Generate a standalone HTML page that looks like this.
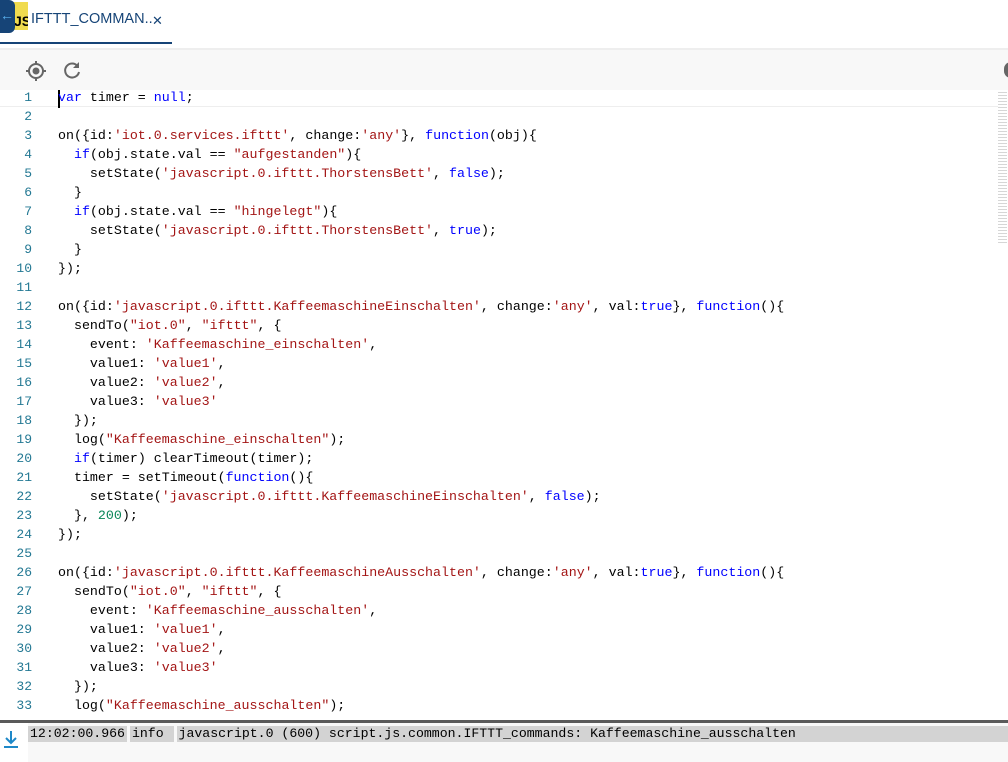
<!DOCTYPE html>
<html><head><meta charset="utf-8"><style>
body{margin:0;width:1008px;height:762px;overflow:hidden;background:#fff;font-family:"Liberation Sans",sans-serif;position:relative}
.tabbar{position:absolute;left:0;top:0;width:1008px;height:48px;background:#fff}
.tab{position:absolute;left:0;top:0;width:172px;height:42px;border-bottom:2px solid #164477}
.js{position:absolute;left:10px;top:2px;width:18px;height:28px;background:#f0db4f;font-weight:bold;font-size:14px;line-height:38px;padding-left:4px;box-sizing:border-box;overflow:hidden}
.back{position:absolute;left:0;top:0;width:15px;height:33px;background:#164477;border-radius:0 6px 6px 0;color:#5ab1ef;font-size:14px;line-height:30px}
.title{position:absolute;left:31px;top:11px;font-size:14.5px;color:#164477}
.x{position:absolute;left:152px;top:13px;font-size:13px;color:#164477}
.toolbar{position:absolute;left:0;top:48px;width:1008px;height:40px;background:#f8f8f8;border-top:2px solid #eee}
.ed{position:absolute;left:0;top:88px;width:1008px;height:632px;font-family:"Liberation Mono",monospace;font-size:13.3px}
.ln{position:absolute;left:0;width:32px;text-align:right;color:#237893;font-size:13px}
.cd{position:absolute;left:58px;white-space:pre;color:#000}
.k{color:#0000ff}.s{color:#a31515}.n{color:#098658}
.sep{position:absolute;left:0;top:720px;width:1008px;height:3px;background:#5a5a5a}
.logbg{position:absolute;left:0;top:723px;width:1008px;height:39px;background:#f8f8f8}
.row{position:absolute;left:28px;top:726px;width:980px;overflow:hidden;height:16px;font-family:"Liberation Mono",monospace;font-size:13.2px;line-height:16px;white-space:pre;color:#000}
.row span{background:#d3d3d3;display:inline-block;margin-right:3px;padding:0 2px}
</style></head><body>
<div class="tabbar">
<div class="tab"></div>
<div class="js">JS</div>
<div class="back">←</div>
<div class="title">IFTTT_COMMAN..</div>
<div class="x">✕</div>
</div>
<div class="toolbar">
<svg style="position:absolute;left:25px;top:10px" width="22" height="22" viewBox="0 0 22 22"><circle cx="11" cy="11" r="7" fill="none" stroke="#666" stroke-width="2"/><circle cx="11" cy="11" r="3.5" fill="#666"/><path d="M11 1v3M11 18v3M1 11h3M18 11h3" stroke="#666" stroke-width="2"/></svg>
<svg style="position:absolute;left:62px;top:10px" width="20" height="20" viewBox="0 0 20 20"><path d="M15.5 6A7 7 0 1 0 17 12" fill="none" stroke="#666" stroke-width="2"/><path d="M17 2v6h-6z" fill="#666"/></svg>
<div style="position:absolute;left:1004px;top:12px;width:14px;height:16px;border-radius:8px;background:#666"></div>
</div>
<div style="position:absolute;left:0;top:106px;width:1000px;height:1px;background:#eee"></div>
<div style="position:absolute;left:998px;top:90px;width:9px;height:155px;background:repeating-linear-gradient(#fff 0,#fff 2px,#ccc 2px,#ccc 3px);opacity:.8"></div>
<div style="position:absolute;left:58px;top:90px;width:2px;height:18px;background:#000"></div>
<div class="ed" id="ed"></div>
<div class="sep"></div>
<div class="logbg"></div>
<div style="position:absolute;left:0;top:723px;width:28px;height:39px;background:#fff"></div>
<svg style="position:absolute;left:3px;top:730px" width="16" height="18" viewBox="0 0 16 18"><path d="M8 1v11M3 8l5 5 5-5" fill="none" stroke="#1e88c8" stroke-width="2"/><path d="M1 17h14" stroke="#1e88c8" stroke-width="2"/></svg>
<div class="row"><span>12:02:00.966</span><span>info </span><span>javascript.0 (600) script.js.common.IFTTT_commands: Kaffeemaschine_ausschalten                                                                    </span></div>
<script>
var L=[
'<span class="k">var</span> timer = <span class="k">null</span>;',
'',
'on({id:<span class="s">\'iot.0.services.ifttt\'</span>, change:<span class="s">\'any\'</span>}, <span class="k">function</span>(obj){',
'  <span class="k">if</span>(obj.state.val == <span class="s">"aufgestanden"</span>){',
'    setState(<span class="s">\'javascript.0.ifttt.ThorstensBett\'</span>, <span class="k">false</span>);',
'  }',
'  <span class="k">if</span>(obj.state.val == <span class="s">"hingelegt"</span>){',
'    setState(<span class="s">\'javascript.0.ifttt.ThorstensBett\'</span>, <span class="k">true</span>);',
'  }',
'});',
'',
'on({id:<span class="s">\'javascript.0.ifttt.KaffeemaschineEinschalten\'</span>, change:<span class="s">\'any\'</span>, val:<span class="k">true</span>}, <span class="k">function</span>(){',
'  sendTo(<span class="s">"iot.0"</span>, <span class="s">"ifttt"</span>, {',
'    event: <span class="s">\'Kaffeemaschine_einschalten\'</span>,',
'    value1: <span class="s">\'value1\'</span>,',
'    value2: <span class="s">\'value2\'</span>,',
'    value3: <span class="s">\'value3\'</span>',
'  });',
'  log(<span class="s">"Kaffeemaschine_einschalten"</span>);',
'  <span class="k">if</span>(timer) clearTimeout(timer);',
'  timer = setTimeout(<span class="k">function</span>(){',
'    setState(<span class="s">\'javascript.0.ifttt.KaffeemaschineEinschalten\'</span>, <span class="k">false</span>);',
'  }, <span class="n">200</span>);',
'});',
'',
'on({id:<span class="s">\'javascript.0.ifttt.KaffeemaschineAusschalten\'</span>, change:<span class="s">\'any\'</span>, val:<span class="k">true</span>}, <span class="k">function</span>(){',
'  sendTo(<span class="s">"iot.0"</span>, <span class="s">"ifttt"</span>, {',
'    event: <span class="s">\'Kaffeemaschine_ausschalten\'</span>,',
'    value1: <span class="s">\'value1\'</span>,',
'    value2: <span class="s">\'value2\'</span>,',
'    value3: <span class="s">\'value3\'</span>',
'  });',
'  log(<span class="s">"Kaffeemaschine_ausschalten"</span>);'
];
var h='';
for(var i=0;i<L.length;i++){var t=90+i*19;h+='<div class="ln" style="top:'+(t-88)+'px">'+(i+1)+'</div><div class="cd" style="top:'+(t-88)+'px">'+L[i]+'</div>';}
document.getElementById('ed').innerHTML=h;
</script>
</body></html>
